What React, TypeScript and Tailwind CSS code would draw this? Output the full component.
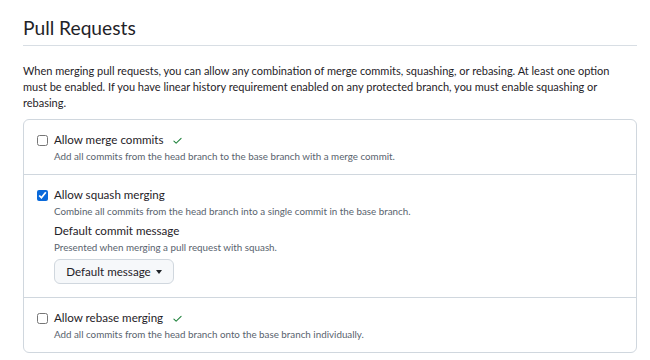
function Check() {
  return (
    <svg width="11" height="11" viewBox="0 0 16 16" className="text-[#1a7f37]" fill="currentColor">
      <path d="M13.78 4.22a.75.75 0 0 1 0 1.06l-7.25 7.25a.75.75 0 0 1-1.06 0L2.22 9.28a.751.751 0 0 1 .018-1.042.751.751 0 0 1 1.042-.018L6 10.94l6.72-6.72a.75.75 0 0 1 1.06 0Z" />
    </svg>
  );
}

interface OptionProps {
  label: string;
  description: string;
  checked?: boolean;
  verified?: boolean;
  children?: React.ReactNode;
}

function Option({ label, description, checked, verified, children }: OptionProps) {
  return (
    <div className="flex gap-[6px] px-[13px] pt-3 pb-[10px]">
      <input
        type="checkbox"
        defaultChecked={checked}
        className="mt-[3px] h-[11px] w-[11px] accent-[#0969da]"
      />
      <div className="flex-1">
        <div className="flex items-center gap-[9px] h-4">
          <span className="text-[11.6px] text-[#1f2328]">{label}</span>
          {verified && <Check />}
        </div>
        <p className="text-[9.8px] leading-4 text-[#59636e]">{description}</p>
        {children}
      </div>
    </div>
  );
}

export default function App() {
  return (
    <div
      className="w-[650px] h-[360px] bg-white pl-[23px] pr-[13px] pt-[13px]"
      style={{ fontFamily: 'Lato, sans-serif' }}
    >
      <h2 className="text-[19.2px] leading-[30px] text-[#1f2328] border-b border-[#d8dee4] pb-[2px]">
        Pull Requests
      </h2>
      <p className="mt-[17px] pr-3 text-[11px] leading-4 text-[#1f2328]">
        When merging pull requests, you can allow any combination of merge commits, squashing, or rebasing. At least one
        option must be enabled. If you have linear history requirement enabled on any protected branch, you must enable
        squashing or rebasing.
      </p>
      <div className="mt-2 border border-[#d0d7de] rounded-md divide-y divide-[#d0d7de]">
        <Option
          label="Allow merge commits"
          description="Add all commits from the head branch to the base branch with a merge commit."
          verified
        />
        <Option
          label="Allow squash merging"
          description="Combine all commits from the head branch into a single commit in the base branch."
          checked
        >
          <div className="mt-1 text-[11.6px] leading-4 text-[#1f2328]">Default commit message</div>
          <p className="text-[9.8px] leading-4 text-[#59636e]">Presented when merging a pull request with squash.</p>
          <button className="mt-1 mb-[3px] flex items-center gap-[5px] h-[25px] w-[120px] justify-center rounded-md border border-[#d0d7de] bg-[#f6f8fa] text-[11.6px] text-[#1f2328]">
            Default message
            <svg width="6" height="4" viewBox="0 0 6 4" fill="currentColor">
              <path d="M0 0h6L3 4z" />
            </svg>
          </button>
        </Option>
        <Option
          label="Allow rebase merging"
          description="Add all commits from the head branch onto the base branch individually."
          verified
        />
      </div>
    </div>
  );
}
